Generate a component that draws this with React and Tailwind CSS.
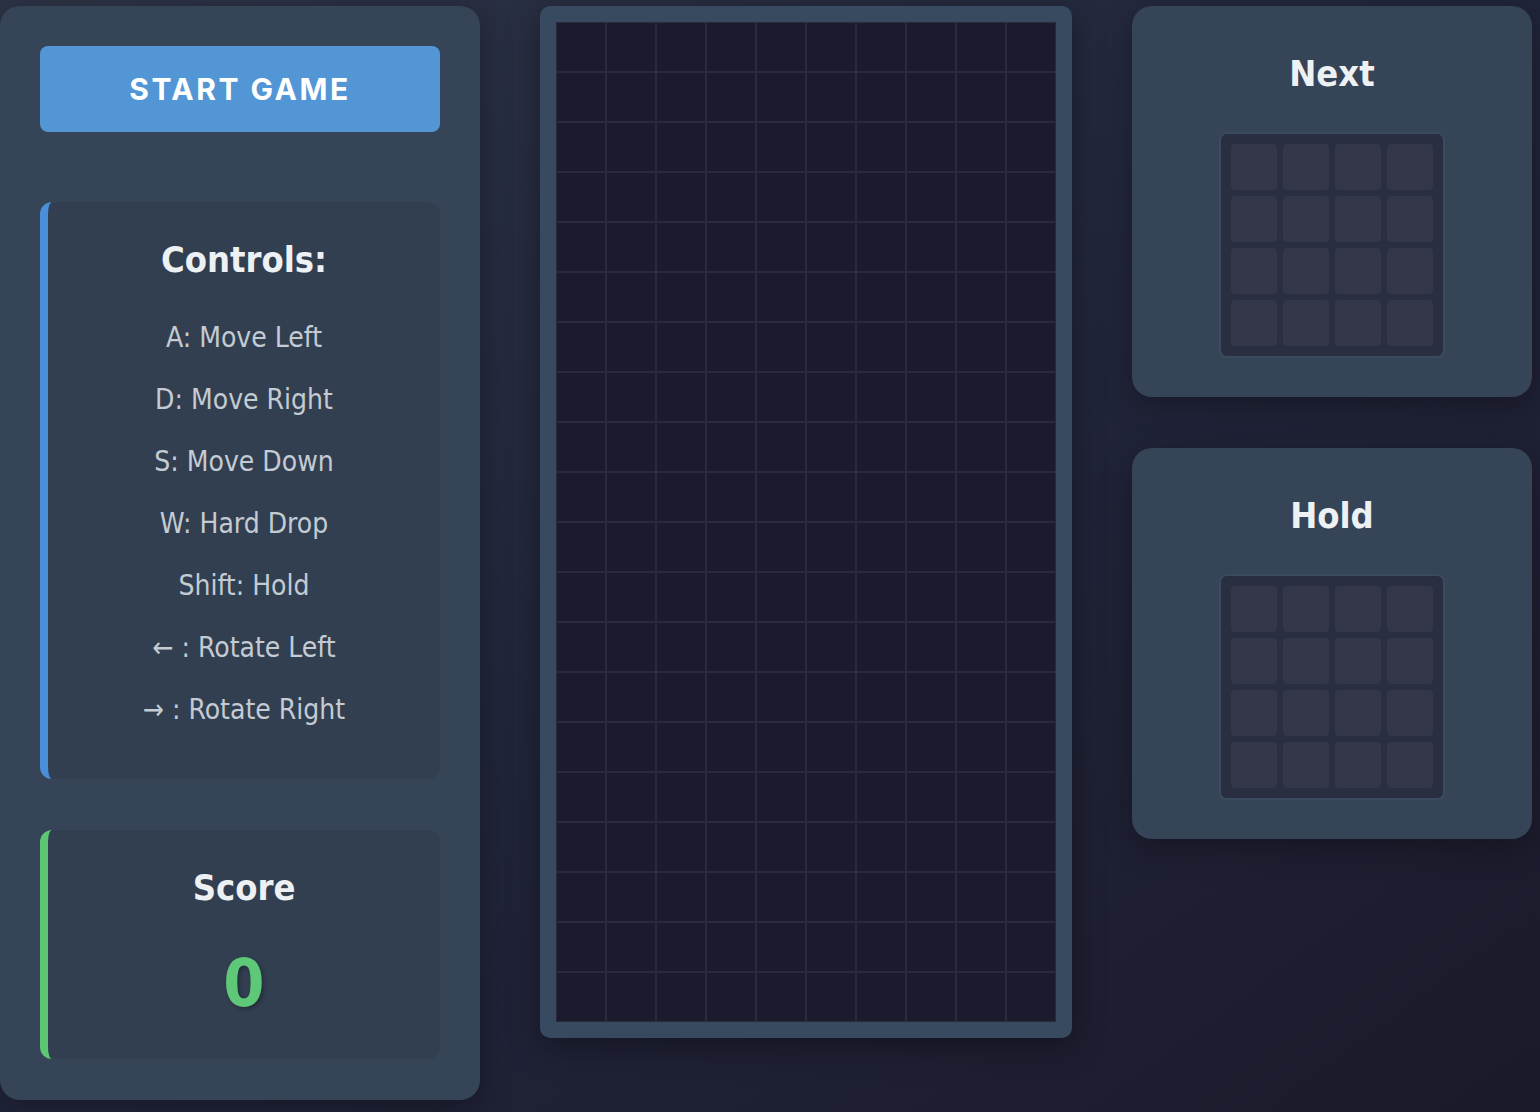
const controls = [
  "A: Move Left",
  "D: Move Right",
  "S: Move Down",
  "W: Hard Drop",
  "Shift: Hold",
  "← : Rotate Left",
  "→ : Rotate Right",
];

const boardCells = Array.from({ length: 200 });
const previewCells = Array.from({ length: 16 });

function PreviewPanel({ title }) {
  return (
    <div className="w-[400px] h-[391px] rounded-[20px] bg-[#364457] shadow-[0_8px_32px_rgba(0,0,0,0.3)] pt-[40px] flex flex-col items-center">
      <div className="h-[56px] flex items-center justify-center text-[36px] font-bold text-[#edf1f4]">
        {title}
      </div>
      <div className="mt-[30px] border-2 border-[#3a4b5f] rounded-[8px]">
        <div className="bg-[#292e40] rounded-[6px] p-[10px] grid grid-cols-4 gap-[6px]">
          {previewCells.map((_, i) => (
            <div key={i} className="w-[46px] h-[46px] rounded-[4px] bg-[#333749]" />
          ))}
        </div>
      </div>
    </div>
  );
}

export default function App() {
  return (
    <div
      className="min-h-screen h-[1112px] overflow-hidden bg-gradient-to-br from-[#2c3446] via-[#21253a] to-[#1b1a2b] pt-[6px]"
      style={{ fontFamily: '"DejaVu Sans Condensed", "DejaVu Sans", Verdana, sans-serif' }}
    >
      <div className="flex items-start gap-[60px]">
        {/* left column */}
        <div className="w-[480px] h-[1094px] rounded-[20px] bg-[#364457] shadow-[0_8px_32px_rgba(0,0,0,0.3)] p-[40px] flex flex-col">
          <button
            className="h-[86px] w-full rounded-[8px] bg-[#5296d5] text-white text-[30px] font-bold tracking-[2.5px]"
            style={{ fontFamily: "Inter, sans-serif" }}
          >
            START GAME
          </button>

          <div className="mt-[70px] rounded-[12px] border-l-[8px] border-[#4a90d9] bg-[#323f51] pt-[30px] pb-[38px] flex flex-col items-center">
            <div className="h-[56px] flex items-center text-[36px] font-bold text-[#edf1f4]">
              Controls:
            </div>
            <div className="mt-[19px] flex flex-col items-center w-full">
              {controls.map((c) => (
                <div key={c} className="h-[62px] flex items-center text-[28px] text-[#c4cbd3]">
                  {c}
                </div>
              ))}
            </div>
          </div>

          <div className="mt-[51px] rounded-[12px] border-l-[8px] border-[#5cc672] bg-[#323f51] pt-[30px] pb-[36px] flex flex-col items-center">
            <div className="h-[56px] flex items-center text-[36px] font-bold text-[#edf1f4]">
              Score
            </div>
            <div className="mt-[27px] h-[80px] flex items-center text-[66px] font-bold text-[#5ec878] [text-shadow:2px_2px_4px_rgba(0,0,0,0.3)]">
              0
            </div>
          </div>
        </div>

        {/* board */}
        <div className="rounded-[10px] bg-[#384a60] p-[16px] shadow-[0_8px_32px_rgba(0,0,0,0.35)]">
          <div className="grid grid-cols-10 w-[500px] bg-[#1b1b2e]">
            {boardCells.map((_, i) => (
              <div key={i} className="w-[50px] h-[50px] border border-[#2b293c] bg-[#1b1b2e]" />
            ))}
          </div>
        </div>

        {/* right column */}
        <div className="flex flex-col gap-[51px]">
          <PreviewPanel title="Next" />
          <PreviewPanel title="Hold" />
        </div>
      </div>
    </div>
  );
}
